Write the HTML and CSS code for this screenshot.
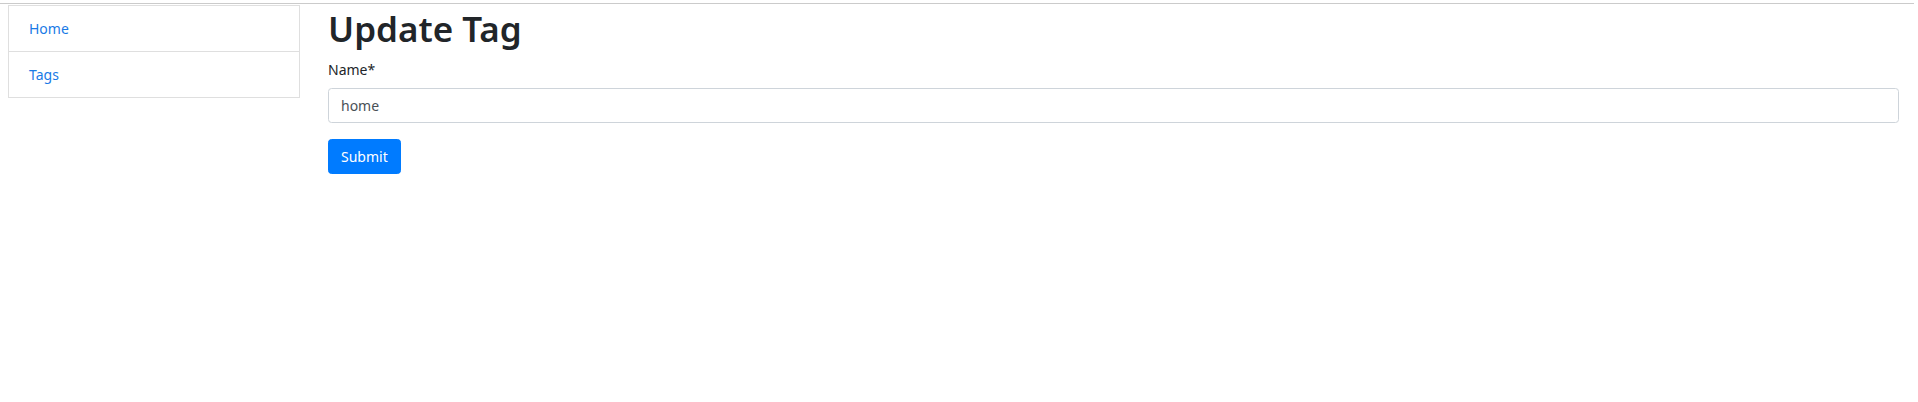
FILE: index.html
```html
<!DOCTYPE html>
<html lang="en">
<head>
<meta charset="utf-8">
<title>Update Tag</title>
<link rel="stylesheet" href="styles.css">
</head>
<body>
<div class="topbar"></div>
<div class="layout">
  <aside class="sidebar">
    <ul class="list-group">
      <li class="list-item"><a href="#">Home</a></li>
      <li class="list-item"><a href="#">Tags</a></li>
    </ul>
  </aside>
  <main class="content">
    <h1 class="title">Update Tag</h1>
    <form class="form">
      <div class="form-group">
        <label class="label" for="name">Name*</label>
        <input class="input" id="name" type="text" value="home">
      </div>
      <button class="btn" type="button">Submit</button>
    </form>
  </main>
</div>
</body>
</html>
```
FILE: styles.css
```css
html { font-size: 16px; }
* { box-sizing: border-box; }
body {
  margin: 0;
  font-family: "Noto Sans", "Open Sans", sans-serif;
  font-size: 14px;
  line-height: 1.5;
  color: #212529;
  background: #fff;
}
.topbar {
  height: 4px;
  margin-right: 4px;
  border-bottom: 1px solid #cbcbcb;
}
.layout {
  display: flex;
  gap: 28px;
  padding: 1px 19px 0 8px;
}
.sidebar {
  width: 292px;
  flex: none;
}
.list-group {
  list-style: none;
  margin: 0;
  padding: 0;
  border: 1px solid #dfdfdf;
}
.list-item {
  padding: 12px 20px;
  line-height: 21px;
}
.list-item + .list-item {
  border-top: 1px solid #dfdfdf;
}
.list-item a {
  color: #1a7ae6;
  text-decoration: none;
}
.content {
  flex: 1;
  min-width: 0;
}
.title {
  margin: 3px 0 9px;
  font-size: 35px;
  font-weight: 600;
  line-height: 42px;
  color: #212529;
}
.form-group {
  margin-bottom: 16px;
}
.label {
  display: block;
  margin-bottom: 8px;
  line-height: 21px;
}
.input {
  display: block;
  width: 100%;
  height: 35px;
  padding: 6px 12px;
  font: inherit;
  font-size: 14px;
  color: #495057;
  border: 1px solid #ced4da;
  border-radius: 3.5px;
}
.btn {
  display: inline-block;
  padding: 6px 12px;
  font: inherit;
  font-size: 14px;
  line-height: 21px;
  color: #fff;
  background: #007bff;
  border: 1px solid #007bff;
  border-radius: 3.5px;
}
```
